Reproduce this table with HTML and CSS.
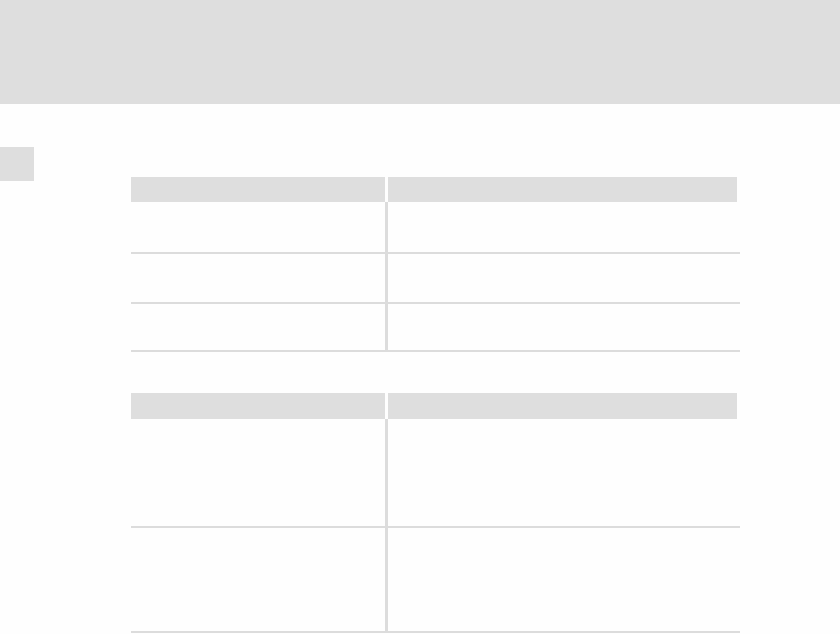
FILE: index.html
```html
<!DOCTYPE html>
<html>
<head>
<meta charset="utf-8">
<link rel="stylesheet" href="styles.css">
</head>
<body>
<header class="band"></header>
<main class="page">
  <aside class="tab"></aside>
  <section class="content">
    <div class="table t1">
      <div class="thead"><div class="th th-left"></div><div class="th th-right"></div></div>
      <div class="row r1"><div class="td td-left"></div><div class="td td-right"></div></div>
      <div class="row r2"><div class="td td-left"></div><div class="td td-right"></div></div>
      <div class="row r3"><div class="td td-left"></div><div class="td td-right"></div></div>
    </div>
    <div class="table t2">
      <div class="thead"><div class="th th-left"></div><div class="th th-right"></div></div>
      <div class="row r4"><div class="td td-left"></div><div class="td td-right"></div></div>
      <div class="row r5"><div class="td td-left"></div><div class="td td-right"></div></div>
    </div>
  </section>
</main>
</body>
</html>
```
FILE: styles.css
```css
html, body {
  margin: 0;
  padding: 0;
  background: #fefefe;
  font-family: "Liberation Sans", Arial, sans-serif;
}
.band {
  height: 104px;
  background: #dedede;
}
.page {
  display: flex;
  align-items: flex-start;
}
.tab {
  width: 34px;
  height: 34px;
  margin-top: 43px;
  background: #dedede;
  flex: none;
}
.content {
  margin-left: 97px;
  padding-top: 73px;
  width: 609px;
  display: flex;
  flex-direction: column;
}
.table {
  display: flex;
  flex-direction: column;
}
.t2 {
  margin-top: 41px;
}
.thead {
  display: flex;
  height: 25px;
}
.th {
  background: #dedede;
}
.th-left {
  width: 254px;
  margin-right: 3px;
}
.th-right {
  width: 349px;
}
.row {
  display: flex;
  border-bottom: 2px solid #dcdcdc;
}
.td-left {
  width: 254px;
  border-right: 3px solid #dcdcdc;
}
.td-right {
  flex: 1;
}
.r1 { height: 50px; }
.r2 { height: 48px; }
.r3 { height: 46px; }
.t2 .thead { height: 26px; }
.r4 { height: 107px; }
.r5 { height: 103px; }
```
